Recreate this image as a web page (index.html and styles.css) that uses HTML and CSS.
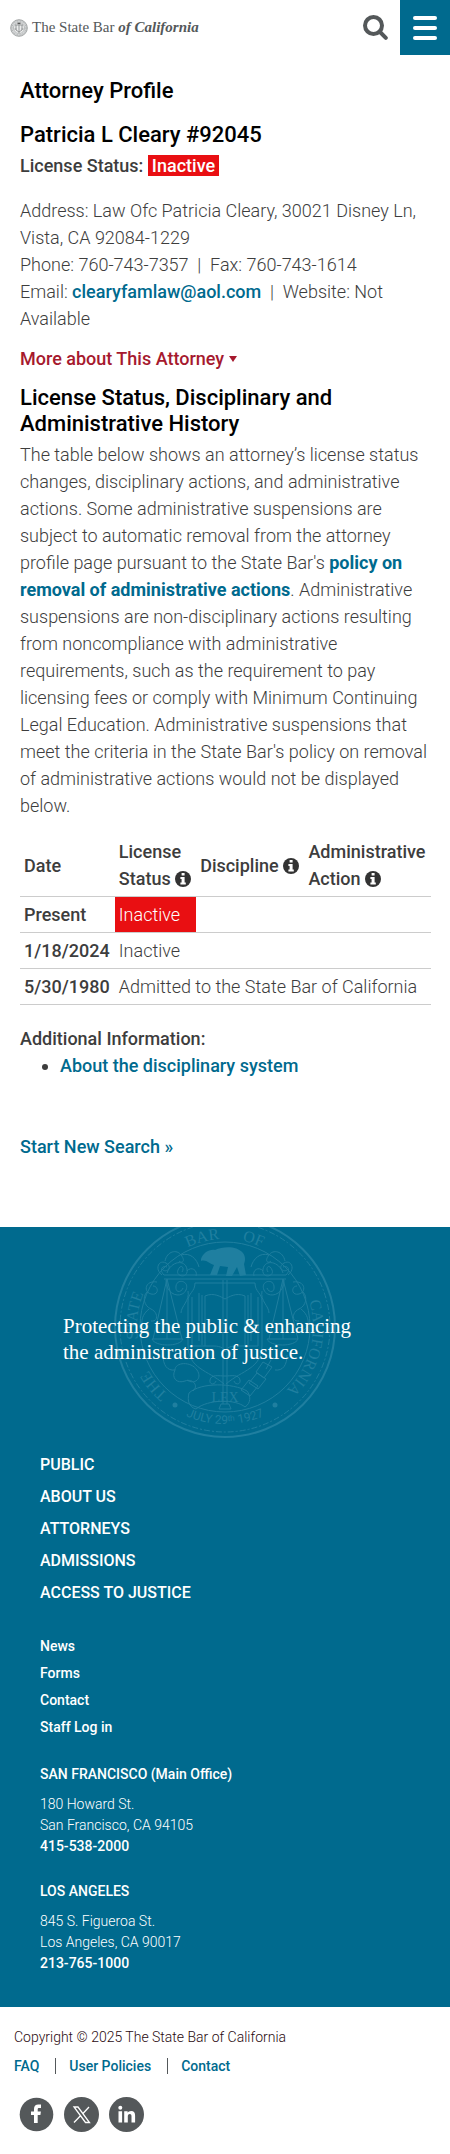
FILE: index.html
```
<!DOCTYPE html>
<html lang="en">
    <head>
        <meta charset="utf-8">
        <meta name="viewport" content="width=device-width, initial-scale=1">
        <title>Patricia L Cleary # 92045 - Attorney Licensee Search</title>
        <link rel="stylesheet" href="styles.css">
    </head>
    <body>
        <svg class="defs" aria-hidden="true">
            <symbol id="info" viewBox="0 0 16 16">
                <circle cx="8" cy="8" r="8" fill="#333"/>
                <path d="M6.6 2h3v2.6h-3zM5.4 6h4.2v5.4h1.2v2H5.4v-2h1.2V8H5.4z" fill="#fff"/>
            </symbol>
        </svg>

        <header class="header">
            <a href="#" class="logo">
                <svg width="18" height="18" viewBox="0 0 18 18" fill="none" stroke="#8d9091" aria-hidden="true">
                    <circle cx="9" cy="9" r="8.3" fill="#dcdedf" stroke-width=".8"/>
                    <circle cx="9" cy="9" r="7" stroke-width=".7" stroke-dasharray="1 .7"/>
                    <circle cx="9" cy="9" r="5.5" fill="#eceded" stroke-width=".5"/>
                    <path d="M5 6h8M6 6v5l3 2 3-2V6M9 6v8M4.5 10h2M11.5 10h2" stroke-width=".9"/>
                    <path d="M7.5 4.5h3" stroke="#555" stroke-width="1.4"/>
                </svg>
                <span>The State Bar <em>of California</em></span>
            </a>
            <button type="button" class="search" aria-label="Search">
                <svg width="25" height="25" viewBox="0 0 25 25" fill="none" stroke="#54585a" stroke-linecap="round">
                    <circle cx="10.5" cy="10.5" r="8.5" stroke-width="4"/>
                    <path d="M17 17l5.8 5.8" stroke-width="4"/>
                </svg>
            </button>
            <button type="button" class="menu" aria-label="Menu">
                <span></span><span></span><span></span>
            </button>
        </header>

        <main class="content">
            <h1>Attorney Profile</h1>
            <h2>Patricia L Cleary #92045</h2>
            <p class="status">License Status: <span class="badge">Inactive</span></p>
            <div class="contact">
                <p>Address: Law Ofc Patricia Cleary, 30021 Disney Ln, Vista, CA 92084-1229</p>
                <p>Phone: 760-743-7357 &nbsp;|&nbsp; Fax: 760-743-1614</p>
                <p>Email: <a href="#">clearyfamlaw@aol.com</a> &nbsp;|&nbsp; Website: Not Available</p>
            </div>
            <button type="button" class="more">More about This Attorney</button>

            <h3>License Status, Disciplinary and Administrative History</h3>
            <p>The table below shows an attorney’s license status changes, disciplinary actions, and administrative actions. Some administrative suspensions are subject to automatic removal from the attorney profile page pursuant to the State Bar's <a href="#" class="bold">policy on removal of administrative actions</a>. Administrative suspensions are non-disciplinary actions resulting from noncompliance with administrative requirements, such as the requirement to pay licensing fees or comply with Minimum Continuing Legal Education. Administrative suspensions that meet the criteria in the State Bar's policy on removal of administrative actions would not be displayed below.</p>

            <table class="history">
                <thead>
                    <tr>
                        <th>Date</th>
                        <th>License<br>Status <svg class="info"><use href="#info"/></svg></th>
                        <th>Discipline <svg class="info"><use href="#info"/></svg></th>
                        <th>Administrative<br>Action <svg class="info"><use href="#info"/></svg></th>
                    </tr>
                </thead>
                <tbody>
                    <tr>
                        <th>Present</th>
                        <td class="inactive">Inactive</td>
                        <td></td>
                        <td></td>
                    </tr>
                    <tr>
                        <th>1/18/2024</th>
                        <td>Inactive</td>
                        <td></td>
                        <td></td>
                    </tr>
                    <tr>
                        <th>5/30/1980</th>
                        <td colspan="3">Admitted to the State Bar of California</td>
                    </tr>
                </tbody>
            </table>

            <div class="additional">
                <strong>Additional Information:</strong>
                <ul>
                    <li><a href="#">About the disciplinary system</a></li>
                </ul>
            </div>
            <p><a href="#">Start New Search »</a></p>
        </main>

        <footer>
            <div class="footer">
                <div class="mission">
                    <svg class="seal" viewBox="-112 -112 224 224" aria-hidden="true">
                        <defs>
                            <path id="arc" d="M0 88A88 88 0 0 1 0-88A88 88 0 0 1 0 88"/>
                            <path id="arc-date" d="M-55 80A97 97 0 0 0 55 80"/>
                        </defs>
                        <g class="lines">
                            <circle r="110" stroke-width="2"/>
                            <circle r="105" stroke-dasharray="6 2 2 2"/>
                            <circle r="85"/>
                            <!-- scroll work -->
                            <path id="scroll" d="M-63-52c-8-6-3-16 4-12s1 10-3 7M-60-66c2-10 12-12 16-6M-44-72c5 6 1 9-2 6M-44-72c9-3 16 4 18 12M-58-54c4-12 18-14 20-4s-12 8-9 1 7-2 4 2M-38-56c4-5 11-1 9 5M-68-45c-12-2-14 10-6 12s8-8 2-8M-78-35c-5 5-3 14 4 17s8 13 0 12M-76-18c-10 8-9 20 0 22M-59-47c0 16 16 19 20 10s-9-12-10-4 6 6 7 2M-37-36c2 10-7 15-7 22"/>
                            <use href="#scroll" transform="scale(-1 1)"/>
                            <!-- open book on the shield -->
                            <path d="M-30-44h60M-30-44c0 9-7 10-7 18v44c0 24 20 25 36 39M30-44c0 9 7 10 7 18v44c0 24-20 25-36 39M-26-34v48M-23-32v50M-33-30v49h22c7 0 11 3 11 6M33-30v49H11c-7 0-11 3-11 6M26-34v48M23-32v50M-20-31c9-4 16 1 20 3M20-31c-9-4-16 1-20 3M-20-31v50M20-31v50"/>
                            <!-- scales -->
                            <path d="M-61-52h122M-61-48h122M-61-52c-5-5-2-10 3-8M61-52c5-5 2-10-3-8M-58-48l-14 60M-58-48l15 60M-58-48v60M58-48l-14 60M58-48l15 60M58-48v60M-73 12h31c-3 8-28 8-31 0M73 12h-31c3 8 28 8 31 0"/>
                            <path d="M-2-47v124M2-47v124M-15 53c1-6 9-4 15-4s14-2 15 4c1 5-5 5-6 1M-15 53c-1 5 5 5 6 1M-4 77h8l2 5H-6z"/>
                            <!-- ribbon and chain -->
                            <path d="M-62 28c0 10 4 16 12 15 0-8 16-9 22 0s-3 15-10 10M-50 43c-4 8 2 14 10 11s14 5 8 10M-36 66c-2 8 0 14 7 16 12-10 40-10 49-2 6-4 6-11 2-16-14-8-46-9-58 2zM62 28c0 10-4 16-12 15"/>
                            <path d="M16 63l8-10 9 6-8 10zM24 56l8-10 9 6-8 10zM31 45l7-10 9 5-8 11zM41 42l5-9"/>
                        </g>
                        <g fill="currentColor">
                            <!-- bear -->
                            <path d="M-24-68c2-6 8-10 14-9 9-4 22-4 28 3 3 4 2 8 1 11l2 11-6 1-3-9-5 9h-6l2-9-8-1-3 9h-7l4-10c-4-1-8-6-13-4z"/>
                            <circle cx="-50" cy="78" r="2.5"/>
                            <circle cx="50" cy="78" r="2.5"/>
                            <g class="seal-name">
                                <text><textPath href="#arc" startOffset="14%">THE</textPath></text>
                                <text><textPath href="#arc" startOffset="27%">STATE</textPath></text>
                                <text><textPath href="#arc" startOffset="46%">BAR</textPath></text>
                                <text><textPath href="#arc" startOffset="55%">OF</textPath></text>
                                <text><textPath href="#arc" startOffset="79%">CALIFORNIA</textPath></text>
                            </g>
                            <text class="seal-date"><textPath href="#arc-date" startOffset="50%">JULY 29ᵗʰ 1927</textPath></text>
                            <text class="seal-lex" y="75">LEX</text>
                        </g>
                    </svg>
                    <p>Protecting the public &amp; enhancing<br>the administration of justice.</p>
                </div>
                <ul class="nav">
                    <li><a href="#">PUBLIC</a></li>
                    <li><a href="#">ABOUT US</a></li>
                    <li><a href="#">ATTORNEYS</a></li>
                    <li><a href="#">ADMISSIONS</a></li>
                    <li><a href="#">ACCESS TO JUSTICE</a></li>
                </ul>
                <ul class="subnav">
                    <li><a href="#">News</a></li>
                    <li><a href="#">Forms</a></li>
                    <li><a href="#">Contact</a></li>
                    <li><a href="#">Staff Log in</a></li>
                </ul>
                <div class="offices">
                    <address>
                        <h4>SAN FRANCISCO (Main Office)</h4>
                        180 Howard St.<br>
                        San Francisco, CA 94105<br>
                        <a href="#">415-538-2000</a>
                    </address>
                    <address>
                        <h4>LOS ANGELES</h4>
                        845 S. Figueroa St.<br>
                        Los Angeles, CA 90017<br>
                        <a href="#">213-765-1000</a>
                    </address>
                </div>
            </div>
            <div class="legal">
                <p>Copyright © 2025 The State Bar of California</p>
                <ul class="policies">
                    <li><a href="#">FAQ</a></li>
                    <li><a href="#">User Policies</a></li>
                    <li><a href="#">Contact</a></li>
                </ul>
                <div class="social">
                    <a href="#" aria-label="Facebook">
                        <svg viewBox="0 0 35 35">
                            <circle cx="17.5" cy="17.5" r="16.8" fill="#54585a"/>
                            <path d="M15 26v-8h-3v-3.6h3V12c0-3.2 1.8-4.5 4.3-4.5H22v3.4h-1.8c-1.1 0-1.5.5-1.5 1.4v2.1h3.2l-.5 3.6h-2.7v8z" fill="#fff"/>
                        </svg>
                    </a>
                    <a href="#" aria-label="X">
                        <svg viewBox="0 0 35 35">
                            <circle cx="17.5" cy="17.5" r="17.5" fill="#54585a"/>
                            <path d="M10 10h4l11.5 15.5h-4zM25 10l-6.5 7M16.5 18.8L10 25.5" fill="none" stroke="#fff" stroke-width="1.3"/>
                        </svg>
                    </a>
                    <a href="#" aria-label="LinkedIn">
                        <svg viewBox="0 0 35 35">
                            <circle cx="17.5" cy="17.5" r="17.5" fill="#54585a"/>
                            <path d="M9.5 14.2h3.6v11.3H9.5zM15.2 14.2h3.4v1.6c.7-1.2 2-1.9 3.5-1.9 3 0 4 1.9 4 4.9v6.7h-3.6v-6.1c0-1.5-.3-2.5-1.7-2.5-1.5 0-2 1.1-2 2.5v6.1h-3.6z" fill="#fff"/>
                            <circle cx="11.3" cy="10.8" r="2" fill="#fff"/>
                        </svg>
                    </a>
                </div>
            </div>
        </footer>
    </body>
</html>
```
FILE: styles.css
```
*{
    box-sizing: border-box;
}
body{
    margin: 0;
    background: #FFF;
    color: #3D3D3D;
    font-family: Roboto, "Liberation Sans", sans-serif;
    font-size: 18px;
    font-weight: 300;
    line-height: 27px;
}
h1, h2, h3, h4, p, ul{
    margin: 0;
    padding: 0;
}
button{
    padding: 0;
    border: none;
    background: none;
    font: inherit;
    cursor: pointer;
}
a{
    color: #006A8E;
    font-weight: 500;
    text-decoration: none;
}
.defs{
    display: none;
}

/* Header */
.header{
    display: flex;
    align-items: center;
    height: 55px;
    padding-left: 10px;
}
.logo{
    display: flex;
    align-items: center;
    gap: 4px;
    flex: 1;
    color: #54585A;
    font-family: "Liberation Serif", serif;
    font-size: 15px;
    font-weight: 400;
    white-space: nowrap;
}
.logo em{
    font-weight: 700;
}
.search{
    display: flex;
    margin-right: 12px;
}
.menu{
    display: flex;
    flex-direction: column;
    align-items: center;
    justify-content: center;
    gap: 6px;
    width: 50px;
    height: 55px;
    background: #006A8E;
}
.menu span{
    width: 24px;
    height: 4px;
    border-radius: 2px;
    background: #FFF;
}

/* Profile */
.content{
    padding: 23px 19px 67px 20px;
}
h1, h2, h3{
    color: #000;
    font-size: 22px;
    font-weight: 500;
    line-height: 26px;
}
h1{
    margin-bottom: 18px;
}
h2{
    margin-bottom: 4px;
}
.status{
    margin-bottom: 18px;
    font-weight: 500;
}
.badge{
    padding: 0 4px;
    background: #E90F12;
    color: #FFF;
}
.more{
    display: flex;
    align-items: center;
    margin: 13px 0;
    color: #A6192E;
    font-weight: 500;
}
.more:after{
    content: "";
    margin-left: 5px;
    border: 4px solid transparent;
    border-top: 6px solid #A6192E;
    border-bottom: none;
}
h3{
    margin-bottom: 4px;
}
.bold{
    font-weight: 700;
}
.history{
    width: 100%;
    margin: 15px 0 20px;
    border-collapse: collapse;
    text-align: left;
    white-space: nowrap;
}
.history th, .history td{
    padding: 4px;
    border-bottom: 1px solid #CCC;
}
.history th{
    font-weight: 500;
}
.history .inactive{
    background: #E90F12;
    color: #FFF;
}
.info{
    width: 16px;
    height: 16px;
    vertical-align: -2px;
}
.additional{
    margin-bottom: 54px;
}
.additional strong{
    font-weight: 500;
}
.additional ul{
    padding-left: 40px;
}

/* Footer */
.footer{
    padding: 0 40px 33px;
    background: #006A8E;
    color: #FFF;
    font-size: 14px;
    line-height: 21px;
}
.footer a{
    color: #FFF;
}
.mission{
    position: relative;
    height: 224px;
    margin: 0 -40px;
    padding: 86px 20px 0 63px;
    overflow: hidden;
}
.mission p{
    position: relative;
    font-family: "Liberation Serif", serif;
    font-size: 21px;
    font-weight: 400;
    line-height: 26px;
}
.seal{
    position: absolute;
    top: -12px;
    left: calc(50% - 112px);
    width: 224px;
    height: 224px;
    color: #1F7FA0;
}
.seal .lines{
    fill: none;
    stroke: currentColor;
}
.seal text{
    text-anchor: middle;
}
.seal-name{
    font-family: "Liberation Serif", serif;
    font-size: 16px;
    font-weight: 400;
}
.seal-date{
    font-size: 12px;
    font-weight: 400;
}
.seal-lex{
    font-family: "Liberation Serif", serif;
    font-size: 14px;
}
.nav, .subnav, .policies{
    list-style: none;
}
.nav{
    display: grid;
    gap: 5px;
    margin-bottom: 27px;
    font-size: 16px;
    line-height: 27px;
}
.subnav{
    margin-bottom: 22px;
    line-height: 27px;
}
.offices{
    display: grid;
    gap: 23px;
}
address{
    font-style: normal;
}
address h4{
    margin-bottom: 8px;
    font-size: 14px;
    font-weight: 500;
    line-height: 23px;
}

.legal{
    padding: 20px 14px;
    color: #2A0A10;
    font-size: 14px;
    line-height: 21px;
}
.policies{
    display: flex;
    margin: 10px 0 23px;
    line-height: 16px;
}
.policies li + li{
    margin-left: 16px;
    padding-left: 13px;
    border-left: 1px solid #54585A;
}
.social{
    display: flex;
    gap: 10px;
    padding-left: 5px;
}
.social svg{
    display: block;
    width: 35px;
    height: 35px;
}
```
